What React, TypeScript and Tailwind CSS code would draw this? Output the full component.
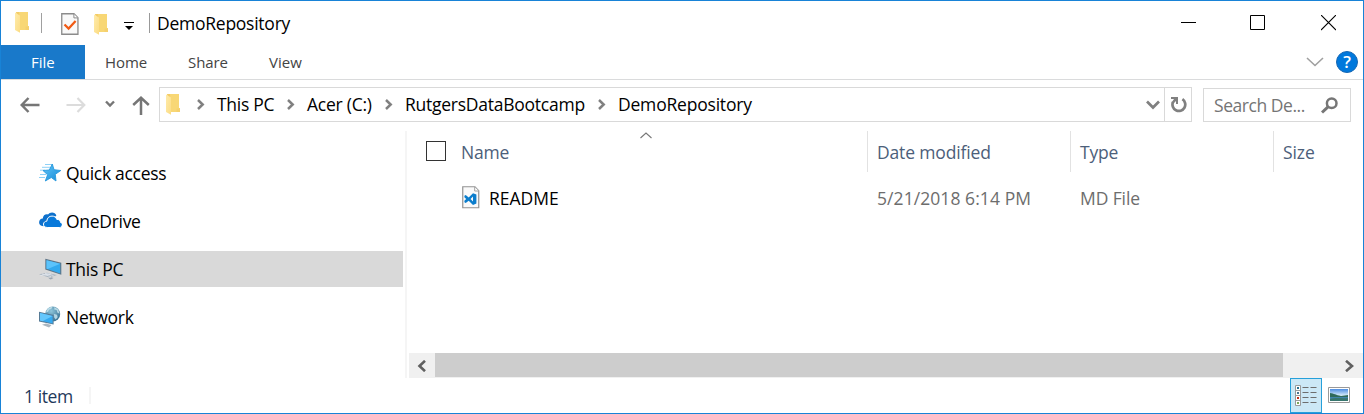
import React from "react";

function Folder() {
  return (
    <svg width="15" height="21" viewBox="0 0 15 21" className="block shrink-0">
      <defs>
        <linearGradient id="folderFront" x1="0" y1="0" x2="1" y2="1">
          <stop offset="0" stopColor="#ffebaa" />
          <stop offset="1" stopColor="#fbdc84" />
        </linearGradient>
      </defs>
      <path d="M1 0h12v14h1v4H4z" fill="#f4cc66" />
      <path d="M4 0h9v14h1v4H5z" fill="#f8d775" />
      <path d="M0 0.5 5 3.5V20.8L0 18z" fill="url(#folderFront)" />
      <path d="M10.5 14.5h3.5v3.5h-3.5z" fill="#f5d06f" />
    </svg>
  );
}

function CheckDoc() {
  return (
    <svg width="18" height="22" viewBox="0 0 18 22" className="block shrink-0">
      <path d="M0.75 0.75h12.2l4 4v16.5H0.75z" fill="#f9f9f9" stroke="#8b8b8b" strokeWidth="1.3" />
      <path d="M12.9 1v3.9h4" fill="#fff" stroke="#8b8b8b" />
      <path d="M3.5 11.5 7.6 15.6 14.6 8" fill="none" stroke="#f05a14" strokeWidth="2.2" />
    </svg>
  );
}

function Crumb({ children, className }: { children: string; className: string }) {
  return (
    <>
      <svg width="8" height="11" viewBox="0 0 8 11" className="shrink-0">
        <path d="M1 1 5.7 5.5 1 10" fill="none" stroke="#808080" strokeWidth="2.5" />
      </svg>
      <span className={"-mt-px ml-[12px] mr-px shrink-0 whitespace-nowrap " + className}>{children}</span>
    </>
  );
}

function QuickIcon() {
  return (
    <svg width="23" height="22" viewBox="0 0 23 22" className="shrink-0">
      <defs>
        <linearGradient id="star" x1="0" y1="0" x2="1" y2="1">
          <stop offset="0" stopColor="#62c8fa" />
          <stop offset="1" stopColor="#1488d6" />
        </linearGradient>
      </defs>
      <path d="M6 2.5h7M3 5.300h8M1 8.200h5M1 12.500h6M0 15.500h6" stroke="#8ed1f7" strokeWidth="1" />
      <path d="M13.300 2 15 7.700 21.800 8.500 16.300 12.300 17 19 12.300 15.500 6.300 19 8.600 12.800 4 8.500 10.300 8z" fill="url(#star)" stroke="#2697dd" strokeWidth="0.9" />
    </svg>
  );
}

function CloudIcon() {
  return (
    <svg width="23" height="22" viewBox="0 0 23 22" className="shrink-0">
      <path d="M4.300 16.200C1.400 16 0 14.500 0.100 12.300.2 10 1.700 8.600 3.800 8.500 4 5.400 6.300 3.800 9 4.400 11 1.500 16.300 1.700 17.400 5.500z" fill="#0d70cc" />
      <path d="M8.200 17.500C5.500 17.300 4.300 15.800 4.500 14 4.700 12.300 6 11.200 7.800 11.200 8 7.800 10.400 6 13 6.100c2.500 0 4.100 1.200 4.800 3.300 2.200-.1 3.600 1.100 3.700 3 1.400.4 2 1.400 1.800 2.500-.3 1.700-1.300 2.600-3 2.600z" fill="#0879da" stroke="#fff" strokeWidth="1" />
    </svg>
  );
}

function PcIcon() {
  return (
    <svg width="23" height="22" viewBox="0 0 23 22" className="shrink-0">
      <path d="M6.300 0.800 22.300 4.800v11.900L6.300 11.500z" fill="#5d7588" />
      <path d="M7.500 2.200 21.200 5.700v9.700L7.500 10.700z" fill="#32a9ee" />
      <path d="M7.500 2.200 21.200 5.700 8.700 11 7.500 10.700z" fill="#5bc3fb" />
      <path d="M0 16.200 8 14.800 18 17 10 19.600z" fill="#aab5c0" />
      <path d="m3 16 9 2.500M6 15.300l8.500 2.200M1.500 17.500 12 15.700" stroke="#e5eaf0" strokeWidth="0.8" />
      <path d="m9.500 20.600 3-1.300 2 .8-2.700 1.300z" fill="#99a5b1" />
    </svg>
  );
}

function NetworkIcon() {
  return (
    <svg width="23" height="22" viewBox="0 0 23 22" className="shrink-0">
      <defs>
        <radialGradient id="globe" cx="0.4" cy="0.3" r="0.75">
          <stop offset="0" stopColor="#8fc5da" />
          <stop offset="1" stopColor="#356f91" />
        </radialGradient>
      </defs>
      <circle cx="13.700" cy="8" r="7.500" fill="url(#globe)" />
      <path d="M7.500 5c1-3 4-4.500 6-4l-1.300 2-2.200.7-.8 2.100-2 .8zM15.500 1l3.800 2.500 1.200 4.200-2.200-1.200-.7-2.400-2.400-.7zM15 8l3 .7.7 2.500-2 2.400-1.500-2z" fill="#c6e3ed" opacity="0.85" />
      <path d="M0 5.800 14.600 9.100v9.500L0 15.400z" fill="#577b96" />
      <path d="M1 7 13.600 9.900v7.500L1 14.600z" fill="#35a9f0" />
      <path d="M1 7 13.600 9.900 3.500 15.200 1 14.600z" fill="#65c7fc" />
      <path d="m3 18.800 4-1.200 5.500 1.400-2.400 2.600z" fill="#aab6c0" />
    </svg>
  );
}

function NavItem({ icon, label, active }: { icon: React.ReactNode; label: string; active?: boolean }) {
  return (
    <div className={"flex h-9 w-[402px] items-center pl-[38px] " + (active ? "bg-[#d9d9d9]" : "")}>
      {icon}
      <span className="ml-[4px] whitespace-nowrap -tracking-[0.3px]">{label}</span>
    </div>
  );
}

function VsDoc() {
  return (
    <svg width="18" height="23" viewBox="0 0 18 23" className="-mt-[2px] shrink-0">
      <path d="M0.750 0.750h12.200l3.800 4v17H0.750z" fill="#fafafa" stroke="#929292" strokeWidth="1.2" />
      <path d="M12.700 1v4h4" fill="#fff" stroke="#a0a0a0" />
      <path fillRule="evenodd" d="M11 7.200 14.400 8.500v9L11 19 6.700 14.800 3.700 17 2.400 16.200V14.800L4.200 13 2.400 11.200V9.800l1.300-.7 3 2.400zM11 10.500 8.500 13 11 15.500z" fill="#0b7dcc" />
    </svg>
  );
}

export default function App() {
  return (
    <div className="flex h-[414px] w-[1364px] flex-col overflow-hidden border border-[#1883d7] bg-white text-[17.5px] leading-6 text-black [font-family:'Open_Sans','Noto_Sans',sans-serif]">
      <header className="flex h-[44px] shrink-0 items-center">
        <div className="flex h-full w-[156px] shrink-0 items-center pl-[14px]">
          <div className="-mt-[1px] shrink-0"><Folder /></div>
          <div className="ml-[11px] h-5 w-px shrink-0 bg-[#a0a0a0]" />
          <div className="ml-[19px] mt-[2px] shrink-0"><CheckDoc /></div>
          <div className="ml-[15px] mt-[3px] shrink-0"><Folder /></div>
          <svg width="10" height="9" viewBox="0 0 10 9" className="ml-[15px] mt-[6px] shrink-0">
            <path d="M0 0h10v1H0zM1 4h8L5 8z" fill="#000" />
          </svg>
          <div className="ml-[15px] h-5 w-px shrink-0 bg-[#999]" />
        </div>
        <span className="-tracking-[0.25px]">DemoRepository</span>
        <div className="ml-auto mr-[27px] flex items-center">
          <svg width="15" height="16" viewBox="0 0 15 16"><path d="M0 7h15v1H0z" /></svg>
          <svg width="15" height="16" viewBox="0 0 15 16" className="ml-[54px]"><path d="M.5.5h14v14H.5z" fill="none" stroke="#000" /></svg>
          <svg width="15" height="16" viewBox="0 0 15 16" className="ml-[56px]"><path d="m0 0 15 15M15 0 0 15" stroke="#000" strokeWidth="1.1" /></svg>
        </div>
      </header>

      <nav className="flex h-[35px] shrink-0 items-stretch border-b border-[#dadbdc] text-[15px] leading-[34px] text-[#444]">
        <div className="w-[84px] bg-[#1979ca] pl-[30px] text-white">File</div>
        <div className="w-[83px] pl-[20px] -tracking-[0.1px]">Home</div>
        <div className="w-[80px] pl-[20px] -tracking-[0.1px]">Share</div>
        <div className="pl-[21px]">View</div>
        <div className="ml-auto mr-[5px] flex items-center gap-[12px]">
          <svg width="18" height="10" viewBox="0 0 18 10"><path d="m1 1 8 7.500L17 1" fill="none" stroke="#a0a0a0" strokeWidth="1.6" /></svg>
          <div className="flex size-[22px] items-center justify-center rounded-full border border-[#1768b4] bg-[#0078dc] text-[17px] font-semibold leading-5 text-white">?</div>
        </div>
      </nav>

      <div className="flex h-[51px] shrink-0 items-start pt-[7px]">
        <div className="flex h-[35px] w-[158px] shrink-0 items-center pl-[19px]">
          <svg width="20" height="16" viewBox="0 0 20 16" className="shrink-0"><path d="M8.500 1 1.700 8l6.800 7M2 8h17.500" fill="none" stroke="#767676" strokeWidth="2.5" /></svg>
          <svg width="20" height="16" viewBox="0 0 20 16" className="ml-[26px] shrink-0"><path d="M11.500 1 18.300 8l-6.800 7M18 8H.5" fill="none" stroke="#dcdcdc" strokeWidth="2.2" /></svg>
          <svg width="10" height="8" viewBox="0 0 10 8" className="-mt-px ml-[19px] shrink-0"><path d="m1 1.500 4 4 4-4" fill="none" stroke="#767676" strokeWidth="2.4" /></svg>
          <svg width="18" height="19" viewBox="0 0 18 19" className="ml-[17px] mt-[1px] shrink-0"><path d="M1.200 9 9 1.800 16.800 9M9 2v17" fill="none" stroke="#767676" strokeWidth="2.5" /></svg>
        </div>
        <div className="flex h-[35px] w-[1033px] shrink-0 items-stretch border border-[#d9d9d9]">
          <div className="flex flex-1 items-center pl-[6px]">
            <Folder />
            <div className="ml-[16px] flex items-center">
              <Crumb className="w-[69px] -tracking-[0.3px]">This PC</Crumb>
              <Crumb className="w-[77px] -tracking-[0.25px]">Acer (C:)</Crumb>
              <Crumb className="w-[192px] -tracking-[0.25px]">RutgersDataBootcamp</Crumb>
              <Crumb className="w-[140px] -tracking-[0.2px]">DemoRepository</Crumb>
            </div>
            <svg width="14" height="10" viewBox="0 0 14 10" className="ml-auto mr-[4px]"><path d="m1 1.500 6 6 6-6" fill="none" stroke="#808080" strokeWidth="2.7" /></svg>
          </div>
          <div className="flex w-[27px] items-center justify-center border-l border-[#d9d9d9]">
            <svg width="17" height="18" viewBox="0 0 17 18"><path d="M12.400 3.200A6.400 6.400 0 1 1 3 6" fill="none" stroke="#808080" strokeWidth="2.7" /><path d="M1 1h7v7H6V5L3.500 7.500 1.500 6.500 4 3H1z" fill="#808080" /></svg>
          </div>
        </div>
        <div className="ml-[11px] mt-[1px] flex h-[34px] w-[148px] items-center border border-[#d9d9d9] pl-[10px] text-[#757575]">
          <span className="w-[107px] whitespace-nowrap -tracking-[0.45px]">Search De...</span>
          <svg width="18" height="17" viewBox="0 0 18 17"><circle cx="10.700" cy="6.200" r="4.800" fill="none" stroke="#767676" strokeWidth="2.5" /><path d="M7 9.800 1 15.500" stroke="#767676" strokeWidth="3" /></svg>
        </div>
      </div>

      <main className="flex h-[247px] shrink-0">
        <aside className="flex w-[404px] shrink-0 flex-col gap-3 pt-6">
          <NavItem icon={<QuickIcon />} label="Quick access" />
          <NavItem icon={<CloudIcon />} label="OneDrive" />
          <NavItem icon={<PcIcon />} label="This PC" active />
          <NavItem icon={<NetworkIcon />} label="Network" />
        </aside>
        <div className="h-[247px] w-[2px] shrink-0 bg-[#f5f5f5]" />
        <section className="ml-[2px] flex flex-1 flex-col">
          <div className="relative flex h-[41px] items-center text-[#4c607a]">
            <svg width="12" height="7" viewBox="0 0 12 7" className="absolute left-[231px] top-[1px]"><path d="M.5 6 6 1l5.500 5" fill="none" stroke="#777" strokeWidth="1.1" /></svg>
            <div className="flex h-full w-[459px] items-center border-r border-[#e2e2e2] pl-[17px]">
              <div className="-mt-px size-5 border border-[#333] bg-white" />
              <span className="ml-[15px] mt-[1px] -tracking-[0.2px]">Name</span>
            </div>
            <div className="h-full w-[203px] border-r border-[#e2e2e2] pl-[9px] pt-[9px] -tracking-[0.15px]">Date modified</div>
            <div className="h-full w-[203px] border-r border-[#e2e2e2] pl-[9px] pt-[9px] -tracking-[0.2px]">Type</div>
            <div className="h-full pl-[9px] pt-[9px] -tracking-[0.1px]">Size</div>
          </div>
          <div className="mt-[8px] flex h-9 items-center text-[#6d6d6d]">
            <div className="flex w-[468px] items-center pl-[53px] text-black">
              <VsDoc />
              <span className="ml-[9px]">README</span>
            </div>
            <span className="w-[203px] tracking-[0.07px]">5/21/2018 6:14 PM</span>
            <span className="-tracking-[0.1px]">MD File</span>
          </div>
          <div className="mt-auto flex h-[25px] items-center bg-[#f0f0f0]">
            <svg width="9" height="12" viewBox="0 0 9 12" className="ml-[8px]"><path d="M8 .8 2.500 6 8 11.200" fill="none" stroke="#606060" strokeWidth="2.6" /></svg>
            <div className="mb-px ml-[9px] h-6 w-[848px] bg-[#cdcdcd]" />
            <svg width="10" height="12" viewBox="0 0 10 12" className="ml-auto mr-[8px]"><path d="M1 .8 7 6 1 11.200" fill="none" stroke="#606060" strokeWidth="2.6" /></svg>
          </div>
        </section>
      </main>

      <footer className="flex h-[35px] shrink-0 items-center text-[#1e395b]">
        <span className="ml-[23px] mt-[1px] w-[65px] -tracking-[0.4px]">1 item</span>
        <div className="h-[17px] w-[2px] bg-[#f5f5f5]" />
        <div className="ml-auto mr-[13px] flex items-center gap-[6px]">
          <div className="flex h-[35px] w-[32px] items-center justify-center border border-[#26a0da] bg-[#cce8f6]">
            <svg width="22" height="22" viewBox="0 0 22 22">
              <path d="M.5.5h5v20h-5zM.5 5.500h5M.5 10.500h5M.5 15.500h5" fill="#fff" stroke="#9a9a9a" />
              <path d="M2 2h2v2H2z" fill="#26708e" /><path d="M2 7h2v2H2z" fill="#48758f" /><path d="M2 12h2v2H2z" fill="#c52c16" /><path d="M2 17h2v2H2z" fill="#78a85b" />
              <path d="M7.500 2.500h6M15.500 2.500h6M7.500 7.500h6M15.500 7.500h6M7.500 12.500h6M15.500 12.500h6M7.500 17.500h6M15.500 17.500h6" stroke="#6d6d6d" />
            </svg>
          </div>
          <svg width="22" height="16" viewBox="0 0 22 16" className="-mt-px">
            <defs><linearGradient id="sky" x1="0" y1="0" x2="0" y2="1"><stop offset="0" stopColor="#4c8de2" /><stop offset="1" stopColor="#e2f3fb" /></linearGradient></defs>
            <path d="M.5.5h21v15H.5z" fill="#fff" stroke="#999" />
            <path d="M2 2h18v7H2z" fill="url(#sky)" />
            <path d="M2 9h18v5H2z" fill="#3f83a9" />
            <path d="M2 6c4 .5 6 2 11 3l7-1v2H2z" fill="#2f6a5a" />
            <path d="M2 12c7-2 12 0 18-1v3H2z" fill="#38766e" />
          </svg>
        </div>
      </footer>
    </div>
  );
}
